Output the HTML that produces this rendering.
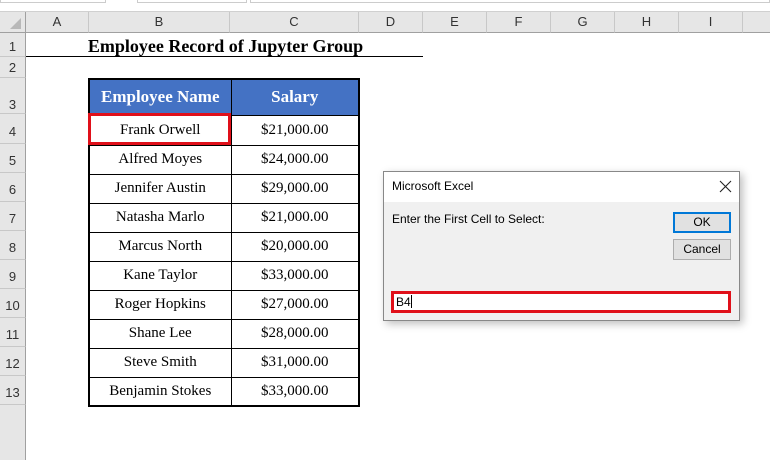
<!DOCTYPE html>
<html><head><style>
*{margin:0;padding:0;box-sizing:border-box}
body{width:770px;height:460px;overflow:hidden;background:#fff;position:relative;font-family:"Liberation Sans",sans-serif}
.a{position:absolute}
.ch{position:absolute;top:12px;height:21px;background:#e6e6e6;border-right:1px solid #c8c8c8;border-bottom:1px solid #a0a0a0;font-size:13px;color:#333;text-align:center;line-height:20px}
.rh{position:absolute;left:0;width:26px;background:#e6e6e6;border-right:1px solid #a0a0a0;border-bottom:1px solid #c8c8c8;font-size:13px;color:#333;text-align:center}
table{position:absolute;left:88px;top:78px;border-collapse:collapse;border:2px solid #000;font-family:"Liberation Serif",serif;font-size:15px}
td{border:1px solid #000;text-align:center;height:29px;padding:0}
th{background:#4472c4;color:#fff;font-size:17px;height:36px;border:1px solid #000}
</style></head><body>
<div class="a" style="left:0;top:0;width:770px;height:12px;background:#fff;border-bottom:1px solid #d0d0d0"></div>
<div class="a" style="left:0;top:0;width:106px;height:3px;border:1px solid #ccc;border-top:none"></div>
<div class="a" style="left:137px;top:0;width:110px;height:3px;border:1px solid #ccc;border-top:none"></div>
<div class="a" style="left:250px;top:0;width:520px;height:3px;border:1px solid #ccc;border-top:none"></div>
<div class="ch" style="left:0;width:26px;border-right:1px solid #a0a0a0"><span style="position:absolute;right:4px;bottom:3px;width:0;height:0;border-left:11px solid transparent;border-bottom:11px solid #b8b8b8"></span></div>
<div class="ch" style="left:26px;width:63px">A</div>
<div class="ch" style="left:89px;width:141px">B</div>
<div class="ch" style="left:230px;width:129px">C</div>
<div class="ch" style="left:359px;width:64px">D</div>
<div class="ch" style="left:423px;width:64px">E</div>
<div class="ch" style="left:487px;width:64px">F</div>
<div class="ch" style="left:551px;width:64px">G</div>
<div class="ch" style="left:615px;width:64px">H</div>
<div class="ch" style="left:679px;width:64px">I</div>
<div class="ch" style="left:743px;width:27px;border-right:none"></div>
<div class="rh" style="top:33px;height:24px;line-height:28px">1</div>
<div class="rh" style="top:57px;height:21px;line-height:22px">2</div>
<div class="rh" style="top:78px;height:36px;line-height:54px">3</div>
<div class="rh" style="top:114px;height:30px;line-height:36px">4</div>
<div class="rh" style="top:144px;height:29px;line-height:34px">5</div>
<div class="rh" style="top:173px;height:29px;line-height:34px">6</div>
<div class="rh" style="top:202px;height:29px;line-height:34px">7</div>
<div class="rh" style="top:231px;height:29px;line-height:34px">8</div>
<div class="rh" style="top:260px;height:29px;line-height:34px">9</div>
<div class="rh" style="top:289px;height:29px;line-height:34px">10</div>
<div class="rh" style="top:318px;height:29px;line-height:34px">11</div>
<div class="rh" style="top:347px;height:29px;line-height:34px">12</div>
<div class="rh" style="top:376px;height:29px;line-height:34px">13</div>
<div class="rh" style="top:405px;height:55px;border-bottom:none"></div>
<div class="a" style="left:26px;top:33px;width:397px;height:24px;border-bottom:1px solid #000;font-family:'Liberation Serif',serif;font-weight:bold;font-size:18px;text-align:center;line-height:26px;padding-left:2px">Employee Record of Jupyter Group</div>
<table>
<tr><th style="width:142px">Employee Name</th><th style="width:128px">Salary</th></tr>
<tr><td style="height:30px">Frank Orwell</td><td>$21,000.00</td></tr>
<tr><td>Alfred Moyes</td><td>$24,000.00</td></tr>
<tr><td>Jennifer Austin</td><td>$29,000.00</td></tr>
<tr><td>Natasha Marlo</td><td>$21,000.00</td></tr>
<tr><td>Marcus North</td><td>$20,000.00</td></tr>
<tr><td>Kane Taylor</td><td>$33,000.00</td></tr>
<tr><td>Roger Hopkins</td><td>$27,000.00</td></tr>
<tr><td>Shane Lee</td><td>$28,000.00</td></tr>
<tr><td>Steve Smith</td><td>$31,000.00</td></tr>
<tr><td>Benjamin Stokes</td><td>$33,000.00</td></tr>
</table>
<div class="a" style="left:88px;top:113px;width:143px;height:32px;border:3px solid #e0101a"></div>
<div class="a" style="left:383px;top:171px;width:357px;height:150px;background:#f0f0f0;border:1px solid #888;box-shadow:3px 3px 8px rgba(0,0,0,.25)">
<div class="a" style="left:0;top:0;width:355px;height:30px;background:#fff;font-size:12px;line-height:28px;padding-left:8px;color:#000">Microsoft Excel</div>
<svg class="a" style="left:335px;top:8px" width="13" height="13" viewBox="0 0 13 13"><path d="M1 1L12 12M12 1L1 12" stroke="#222" stroke-width="1.1"/></svg>
<div class="a" style="left:8px;top:40px;font-size:12px;color:#000">Enter the First Cell to Select:</div>
<div class="a" style="left:289px;top:40px;width:58px;height:21px;border:2px solid #0078d7;background:#e1e1e1;font-size:12px;text-align:center;line-height:17px">OK</div>
<div class="a" style="left:289px;top:67px;width:58px;height:21px;border:1px solid #adadad;background:#e1e1e1;font-size:12px;text-align:center;line-height:19px">Cancel</div>
<div class="a" style="left:7px;top:119px;width:340px;height:22px;border:3px solid #e0101a;background:#fff;font-size:12px;line-height:16px;padding-left:2px">B4<span style="display:inline-block;width:1px;height:13px;background:#000;vertical-align:-2px"></span></div>
</div>
</body></html>
